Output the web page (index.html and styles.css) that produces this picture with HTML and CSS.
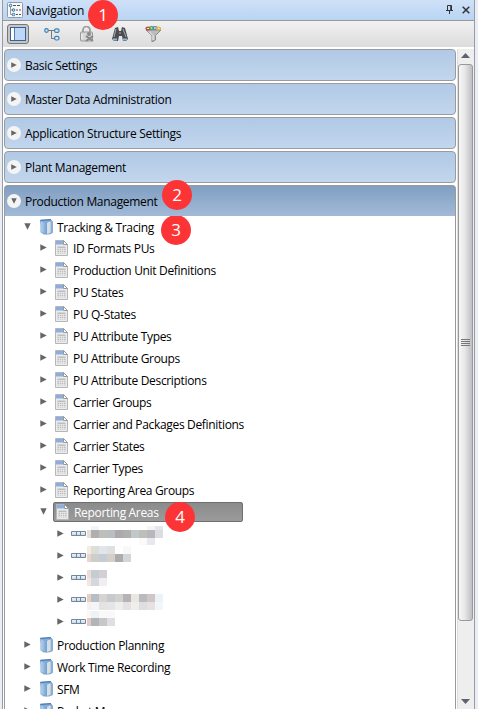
FILE: index.html
```
<!DOCTYPE html>
<html lang="en">
<head>
<meta charset="utf-8">
<title>Navigation</title>
<link rel="stylesheet" href="styles.css">
</head>
<body>
<svg class="defs" width="0" height="0" aria-hidden="true">
  <defs>
    <linearGradient id="fold" x1="0" x2="1"><stop offset="0" stop-color="#b9d5f0"/><stop offset="1" stop-color="#6f9fd0"/></linearGradient>
    <linearGradient id="cell" x1="0" x2="0" y1="0" y2="1"><stop offset="0" stop-color="#f4f8fc"/><stop offset="1" stop-color="#c3d3e3"/></linearGradient>
  </defs>
  <symbol id="right" viewBox="0 0 7 7"><path d="M0.3 0.3v6.400L6.700 3.500z" fill="#666"/></symbol>
  <symbol id="down" viewBox="0 0 7 7"><path d="M0.3 0.3h6.400L3.500 6.700z" fill="#666"/></symbol>
  <symbol id="folder" viewBox="0 0 13 16">
    <path d="M.5 1.500L11 .8l1.500 2v11l-3 1.200H3z" fill="#86b0da" stroke="#7ba3cb" stroke-width=".8"/>
    <path d="M.3 1.300L11 .6" stroke="#4679b5" stroke-width="1.200"/>
    <path d="M7 4l3.500-1.500v11L7 15z" fill="#ecece8"/>
    <path d="M.8 2l6 2v11.300L.8 13.300z" fill="url(#fold)" stroke="#76a3d0" stroke-width=".6"/>
    <path d="M9 3.500v10.500" stroke="#c4c8ca" stroke-width=".8"/>
  </symbol>
  <symbol id="sheet" viewBox="0 0 13 16">
    <path d="M.5.500h8l4 4v11H.5z" fill="#ebebeb" stroke="#b4b6b8"/>
    <path d="M1 1h7.500v3.500H1z" fill="#8aaee0"/>
    <path d="M8.500.5v4h4z" fill="#fff" stroke="#8f9194" stroke-width=".9"/>
    <path d="M2.500 6.500h8v7h-8z" fill="#bdbdbd"/>
    <path d="M2.500 8.500h8M2.500 10.500h8M2.500 12.500h8M4.500 8v6M6.500 8v6M8.500 8v6" stroke="#ededed" stroke-width=".7"/>
  </symbol>
  <symbol id="unit" viewBox="0 0 15 5"><path d="M.5.5h14v4H.5zM5.500.5v4M9.500.5v4" fill="url(#cell)" stroke="#73879d"/></symbol>
</svg>
<main class="panel">
  <header class="titlebar">
    <svg class="title-icon" width="16" height="16" viewBox="0 0 16 16"><rect x=".5" y=".5" width="15" height="15" rx="1" fill="#f8f8f8" stroke="#929aa4"/><path d="M3.500 4v8.500h3M3.500 8h3" fill="none" stroke="#999"/><g fill="#c8e1f7" stroke="#3676aa"><circle cx="3.500" cy="3.500" r="1.300"/><circle cx="6.500" cy="8" r="1.300"/><circle cx="6.500" cy="12.500" r="1.300"/></g><path d="M6 3.500h3M10 3.500h3M9 8h2M12 8h2M9 12.500h2M12 12.500h2" stroke="#555"/></svg>
    <h1>Navigation</h1>
    <svg class="pin" width="8" height="9" viewBox="0 0 8 9"><path d="M1.500 5V.5h4V5M4.700 0v5M0 5.500h7M3.500 6v3" fill="none" stroke="#333"/></svg>
    <svg class="close" width="8" height="8" viewBox="0 0 8 8"><path d="M.7.7l6.600 6.600M7.300.7L.7 7.300" stroke="#333" stroke-width="1.500"/></svg>
    <span class="badge b1">1</span>
  </header>
  <div class="toolbar">
    <span class="tool"><svg width="16" height="14" viewBox="0 0 16 14"><rect x=".5" y=".5" width="15" height="13" fill="#bcd8f6" stroke="#35629c"/><path d="M1 1h3.500v12H1z" fill="#fff"/><path d="M4.500 1v12" stroke="#4f7eb4"/></svg></span>
    <svg class="t-tree" width="16" height="13" viewBox="0 0 16 13"><path d="M4 2.500h7M7.500 2.500v8H11" fill="none" stroke="#777"/><g fill="#d1e8fa" stroke="#4380b4" stroke-width="1.200"><circle cx="2.500" cy="2.500" r="1.800"/><rect x="10.600" y=".8" width="4.400" height="3.600" rx="1.500"/><rect x="10.600" y="8.400" width="4.400" height="3.600" rx="1.500"/></g></svg>
    <svg class="t-lock" width="16" height="16" viewBox="0 0 16 16"><path d="M4 6V4a3.500 3.500 0 017 0v2" fill="none" stroke="#999" stroke-width="1.700"/><rect x="1.500" y="6" width="12" height="9" rx="1" fill="#d6d6d6" stroke="#999"/><circle cx="10" cy="8" r="2" fill="#888"/><path d="M7 10l7 5M14 10l-7 5" stroke="#888" stroke-width="2"/><path d="M3 8v5" stroke="#f4f4f4"/></svg>
    <svg class="t-find" width="16" height="16" viewBox="0 0 16 16"><path d="M3 2l3-1 1 4h2l1-4 3 1 3 11-2 2h-3l-1-5H7l-1 5H2L0 13z" fill="#4b4e50"/><path d="M4 3L2 11M11 3l3 8M7 7h2" stroke="#aaa"/><path d="M1 13.500h4M11 13.500h4" stroke="#94b7d5" stroke-width="2"/></svg>
    <svg class="t-filter" width="17" height="16" viewBox="0 0 17 16"><path d="M1 4h15L10.500 9.500V14L7 16V9.500z" fill="#bcbcbc" stroke="#888"/><path d="M4 5.500l4 4V14" fill="none" stroke="#f7f7f7"/><g fill="none" stroke-width="1.300"><ellipse cx="3" cy="2.500" rx="2" ry="1.300" stroke="#c63d37"/><ellipse cx="6.500" cy="2" rx="2" ry="1.300" stroke="#4d9e3e"/><ellipse cx="10" cy="2" rx="2" ry="1.300" stroke="#4385c0"/><ellipse cx="13.500" cy="2.500" rx="2" ry="1.300" stroke="#dfb62e"/></g></svg>
  </div>
  <div class="body">
    <nav class="content">
      <div class="section"><i class="knob"><svg><use href="#right"/></svg></i><span>Basic Settings</span></div>
      <div class="section"><i class="knob"><svg><use href="#right"/></svg></i><span>Master Data Administration</span></div>
      <div class="section"><i class="knob"><svg><use href="#right"/></svg></i><span>Application Structure Settings</span></div>
      <div class="section"><i class="knob"><svg><use href="#right"/></svg></i><span>Plant Management</span></div>
      <div class="section open"><i class="knob"><svg><use href="#down"/></svg></i><span>Production Management</span><b class="badge b2">2</b></div>
      <div class="tree">
        <div class="row folder first"><svg class="arrow"><use href="#down"/></svg><svg class="icon"><use href="#folder"/></svg><span>Tracking &amp; Tracing</span><b class="badge b3">3</b></div>
        <div class="row item"><svg class="arrow"><use href="#right"/></svg><svg class="icon"><use href="#sheet"/></svg><span>ID Formats PUs</span></div>
        <div class="row item"><svg class="arrow"><use href="#right"/></svg><svg class="icon"><use href="#sheet"/></svg><span>Production Unit Definitions</span></div>
        <div class="row item"><svg class="arrow"><use href="#right"/></svg><svg class="icon"><use href="#sheet"/></svg><span>PU States</span></div>
        <div class="row item"><svg class="arrow"><use href="#right"/></svg><svg class="icon"><use href="#sheet"/></svg><span>PU Q-States</span></div>
        <div class="row item"><svg class="arrow"><use href="#right"/></svg><svg class="icon"><use href="#sheet"/></svg><span>PU Attribute Types</span></div>
        <div class="row item"><svg class="arrow"><use href="#right"/></svg><svg class="icon"><use href="#sheet"/></svg><span>PU Attribute Groups</span></div>
        <div class="row item"><svg class="arrow"><use href="#right"/></svg><svg class="icon"><use href="#sheet"/></svg><span>PU Attribute Descriptions</span></div>
        <div class="row item"><svg class="arrow"><use href="#right"/></svg><svg class="icon"><use href="#sheet"/></svg><span>Carrier Groups</span></div>
        <div class="row item"><svg class="arrow"><use href="#right"/></svg><svg class="icon"><use href="#sheet"/></svg><span>Carrier and Packages Definitions</span></div>
        <div class="row item"><svg class="arrow"><use href="#right"/></svg><svg class="icon"><use href="#sheet"/></svg><span>Carrier States</span></div>
        <div class="row item"><svg class="arrow"><use href="#right"/></svg><svg class="icon"><use href="#sheet"/></svg><span>Carrier Types</span></div>
        <div class="row item"><svg class="arrow"><use href="#right"/></svg><svg class="icon"><use href="#sheet"/></svg><span>Reporting Area Groups</span></div>
        <div class="row item"><svg class="arrow"><use href="#down"/></svg><div class="selected"><svg class="icon"><use href="#sheet"/></svg><span>Reporting Areas</span><b class="badge b4">4</b></div></div>
        <div class="row leaf"><svg class="arrow"><use href="#right"/></svg><svg class="unit"><use href="#unit"/></svg><svg class="mosaic" viewBox="0 523 80 22"><path fill="#eadfd8" d="M0 530h4v8H0z"/><path fill="#aeb0b0" d="M4 530h8v8H4zM36 530h8v8h-8z"/><path fill="#bfbfba" d="M12 530h8v8h-8zM52 530h8v8h-8z"/><path fill="#b9bec3" d="M20 530h8v8h-8z"/><path fill="#c0c8cb" d="M44 530h8v8h-8z"/><path fill="#aca8ab" d="M28 530h8v8h-8z"/><path fill="#b8b8bc" d="M60 530h8v8h-8z"/><path fill="#dddce4" d="M68 530h8v8h-8z"/><path fill="#f4f4f4" d="M4 526h8v4H4z"/><path fill="#f6f4f3" d="M60 526h8v4h-8z"/><path fill="#e6e6ea" d="M68 526h8v4h-8z"/><path fill="#fafaf9" d="M52 538h8v7h-8z"/><path fill="#e8e9ed" d="M60 538h8v7h-8z"/></svg></div>
        <div class="row leaf"><svg class="arrow"><use href="#right"/></svg><svg class="unit"><use href="#unit"/></svg><svg class="mosaic" viewBox="0 545 80 22"><path fill="#f4ebe5" d="M0 546h4v8H0z"/><path fill="#deded9" d="M4 546h8v8H4z"/><path fill="#e2e5eb" d="M12 546h8v8h-8z"/><path fill="#dfe1e0" d="M20 546h8v8h-8z"/><path fill="#f7f8f8" d="M36 546h8v8h-8z"/><path fill="#e9d5cc" d="M0 554h4v8H0z"/><path fill="#cecec9" d="M4 554h8v8H4z"/><path fill="#c4ccd5" d="M12 554h8v8h-8z"/><path fill="#d5cfc9" d="M20 554h8v8h-8z"/><path fill="#acacac" d="M28 554h8v8h-8z"/><path fill="#d1d6d9" d="M36 554h8v8h-8z"/></svg></div>
        <div class="row leaf"><svg class="arrow"><use href="#right"/></svg><svg class="unit"><use href="#unit"/></svg><svg class="mosaic" viewBox="0 567 80 22"><path fill="#ecdcd5" d="M0 570h4v8H0z"/><path fill="#c6cdd1" d="M4 570h8v8H4z"/><path fill="#d2d0d4" d="M12 570h8v8h-8z"/><path fill="#f2e5e2" d="M0 578h4v8H0z"/><path fill="#d3d8de" d="M4 578h8v8H4z"/><path fill="#f1edf1" d="M12 578h8v8h-8z"/></svg></div>
        <div class="row leaf"><svg class="arrow"><use href="#right"/></svg><svg class="unit"><use href="#unit"/></svg><svg class="mosaic" viewBox="0 589 80 22"><path fill="#e6cfc1" d="M0 594h4v8H0z"/><path fill="#b5bec6" d="M4 594h8v8H4z"/><path fill="#d7d3d2" d="M12 594h8v8h-8z"/><path fill="#c6cacc" d="M20 594h8v8h-8z"/><path fill="#d0d0cd" d="M28 594h8v8h-8z"/><path fill="#b4b4b7" d="M36 594h8v8h-8z"/><path fill="#e8e7e0" d="M44 594h8v8h-8z"/><path fill="#babac1" d="M52 594h8v8h-8z"/><path fill="#cfc6c5" d="M60 594h8v8h-8z"/><path fill="#ebf3f8" d="M68 594h8v8h-8z"/><path fill="#f7f0ee" d="M0 602h4v8H0z"/><path fill="#f2f6f8" d="M4 602h8v8H4zM68 602h8v8h-8z"/><path fill="#e4e3e2" d="M12 602h8v8h-8zM36 602h8v8h-8zM60 602h8v8h-8z"/><path fill="#e3e5e9" d="M20 602h8v8h-8z"/><path fill="#efeeec" d="M28 602h8v8h-8zM44 602h8v8h-8z"/><path fill="#dedee0" d="M52 602h8v8h-8z"/></svg></div>
        <div class="row leaf"><svg class="arrow"><use href="#right"/></svg><svg class="unit"><use href="#unit"/></svg><svg class="mosaic" viewBox="0 611 80 22"><path fill="#fbf7f5" d="M0 611h4v7H0z"/><path fill="#eef2f4" d="M4 611h8v7H4z"/><path fill="#f9f9f7" d="M12 611h16v7H12z"/><path fill="#e2cbc1" d="M0 618h4v8H0z"/><path fill="#b1b5b8" d="M4 618h8v8H4z"/><path fill="#c5c8c7" d="M12 618h8v8h-8z"/><path fill="#e0dee4" d="M20 618h8v8h-8z"/></svg></div>
        <div class="row folder after"><svg class="arrow"><use href="#right"/></svg><svg class="icon"><use href="#folder"/></svg><span>Production Planning</span></div>
        <div class="row folder"><svg class="arrow"><use href="#right"/></svg><svg class="icon"><use href="#folder"/></svg><span>Work Time Recording</span></div>
        <div class="row folder"><svg class="arrow"><use href="#right"/></svg><svg class="icon"><use href="#folder"/></svg><span>SFM</span></div>
        <div class="row folder"><svg class="arrow"><use href="#right"/></svg><svg class="icon"><use href="#folder"/></svg><span>Packet Mana</span></div>
      </div>
    </nav>
    <div class="scrollbar">
      <svg class="cap" width="9" height="5"><path d="M4.500 0L9 5H0z" fill="#5c6270"/></svg>
      <div class="thumb"><i></i><i></i><i></i><i></i></div>
      <svg class="cap end" width="9" height="5"><path d="M0 0h9L4.500 5z" fill="#5c6270"/></svg>
    </div>
  </div>
</main>
</body>
</html>
```
FILE: styles.css
```
* { box-sizing: border-box; }
body { margin: 0; height: 709px; overflow: hidden; background: #e9edf5; font: 12px "Open Sans", "Noto Sans", sans-serif; color: #000; padding: 0 3px 0 2px; }
svg { display: block; flex: none; }
.defs { position: absolute; }
.panel { height: 709px; display: flex; flex-direction: column; border: solid #999b9e; border-width: 0 1px; background: #fff; overflow: hidden; }
.titlebar { height: 21px; flex: none; display: flex; align-items: center; border-bottom: 1px solid #999; background: linear-gradient(#cfe1f8, #b9d4f3); padding: 0 4px; position: relative; }
.title-icon { margin: 0 0 1px; }
h1 { font-size: 12px; font-weight: 400; margin: 1px auto 0 3px; line-height: 20px; letter-spacing: -.15px; }
.pin { margin: 0 8px 1px 0; }
.close { margin: 0; }
.toolbar { height: 26px; flex: none; display: flex; align-items: center; background: linear-gradient(#f1f1f1, #dcdcdc); padding-left: 4px; }
.tool { width: 22px; height: 20px; border: 1px solid #777; border-radius: 3px; background: #c5c5c5; display: grid; place-items: center; }
.t-tree { margin-left: 15px; }
.t-lock { margin-left: 19px; }
.t-find { margin-left: 17px; }
.t-filter { margin-left: 17px; }
.body { flex: 1; min-height: 0; display: flex; padding-top: 2px; }
.content { width: 452px; margin-left: 1px; }
.section { height: 32px; margin-bottom: 2px; border: 1px solid #999b9f; border-radius: 4px; background: linear-gradient(#b1c9e5, #c2d6ed); display: flex; align-items: center; padding-left: 2px; position: relative; }
.section span { margin: 2px 0 0 4px; letter-spacing: -.31px; line-height: 18px; }
.knob { width: 14px; height: 14px; border-radius: 50%; background: #f4f4f4; display: grid; place-items: center; }
.knob svg { width: 6px; height: 6px; }
.open { border-bottom: 0; border-radius: 4px 4px 0 0; background: linear-gradient(#809fc2, #a2bad8); height: 31px; margin: 0; }
.tree { height: 493px; overflow: hidden; border: solid #999b9e; border-width: 0 1px; }
.row { height: 22px; display: flex; align-items: center; position: relative; }
.arrow { width: 7px; height: 7px; margin-bottom: 2px; }
.icon { width: 13px; height: 16px; }
.row span { margin-left: 4px; letter-spacing: -.33px; white-space: nowrap; }
.folder { padding-left: 19px; }
.folder .icon { margin: 0 0 1px 9px; }
.first { margin-top: 2px; height: 19px; }
.item { padding-left: 35px; }
.item > .icon { margin: 0 0 1px 8px; }
.item > span { margin-left: 5px; }
.selected { margin-left: 6px; width: 190px; height: 20px; border: 1px solid #6f6f6f; border-radius: 2px; background: linear-gradient(#8b8b8b, #9b9b9b); color: #fff; display: flex; align-items: center; padding-left: 2px; position: relative; }
.selected span { margin-left: 5px; }
.leaf { padding-left: 52px; }
.unit { width: 15px; height: 5px; margin: 0 0 1px 7px; }
.mosaic { width: 80px; height: 22px; margin-left: 1px; shape-rendering: crispEdges; }
.after { margin-top: 1px; }
.badge { position: absolute; width: 30px; height: 30px; border-radius: 50%; background: #fc3435; color: #fff; font: 17px/30px "Open Sans", sans-serif; text-align: center; z-index: 2; }
.titlebar .badge { left: 85px; top: 0; }
.b2 { left: 157px; top: -6px; }
.b3 { left: 156px; top: -3px; }
.b4 { left: 111px; top: -1px; }
.scrollbar { width: 17px; margin-left: 1px; border-left: 1px solid #ddd; background: #eee; padding: 4px 1px 5px 0; display: flex; flex-direction: column; align-items: center; }
.thumb { width: 15px; height: 557px; margin-top: 6px; border: 1px solid #999; border-radius: 3px; background: linear-gradient(90deg, #f7f7f7, #e7e7e7 45%, #bdbfc5); display: flex; flex-direction: column; justify-content: center; align-items: center; gap: 1px; }
.thumb i { width: 9px; height: 1px; background: #777; }
.end { margin-top: auto; }
```
